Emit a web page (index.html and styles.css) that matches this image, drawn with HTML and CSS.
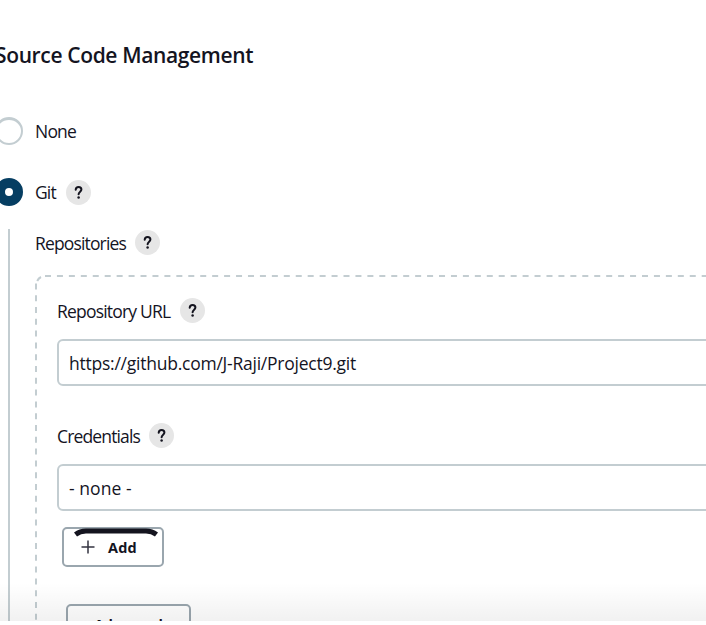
FILE: index.html
```html
<!DOCTYPE html>
<html lang="en">
<head>
<meta charset="utf-8">
<title>Source Code Management</title>
<link rel="stylesheet" href="styles.css">
</head>
<body>
<main class="page">
  <h1 class="title"><span>Source Code Management</span></h1>
  <div class="option option-none"><span class="radio"></span><span class="label t-none">None</span></div>
  <div class="option option-git"><span class="radio checked"></span><span class="label t-git">Git</span><span class="help"><svg viewBox="0 0 25 25"><path d="M9.700 9.800c.1-1.700 1.200-2.700 2.900-2.700 1.600 0 2.800 1 2.800 2.500 0 2.100-2.800 2.100-2.800 4.700"/><circle cx="12.600" cy="17.600" r="1.250"/></svg></span></div>
  <section class="nested">
    <div class="row row-repos"><span class="label t-repos">Repositories</span><span class="help"><svg viewBox="0 0 25 25"><path d="M9.700 9.800c.1-1.700 1.200-2.700 2.900-2.700 1.600 0 2.800 1 2.800 2.500 0 2.100-2.800 2.100-2.800 4.700"/><circle cx="12.600" cy="17.600" r="1.250"/></svg></span></div>
    <div class="repo">
      <svg class="outline" viewBox="0 0 900 600"><path d="M10 1H900"/><path d="M1 600V8" class="side"/><path d="M2.200 6Q3.500 3.200 6 2" class="corner"/></svg>
      <div class="row"><span class="label t-url">Repository URL</span><span class="help"><svg viewBox="0 0 25 25"><path d="M9.700 9.800c.1-1.700 1.200-2.700 2.900-2.700 1.600 0 2.800 1 2.800 2.500 0 2.100-2.800 2.100-2.800 4.700"/><circle cx="12.600" cy="17.600" r="1.250"/></svg></span></div>
      <div class="field"><span class="t-value">https://github.com/J-Raji/Project9.git</span></div>
      <div class="row row-cred"><span class="label t-cred">Credentials</span><span class="help"><svg viewBox="0 0 25 25"><path d="M9.700 9.800c.1-1.700 1.200-2.700 2.900-2.700 1.600 0 2.800 1 2.800 2.500 0 2.100-2.800 2.100-2.800 4.700"/><circle cx="12.600" cy="17.600" r="1.250"/></svg></span></div>
      <div class="field"><span class="t-select">- none -</span></div>
      <button class="add"><svg class="stroke" viewBox="0 0 84 9"><path d="M1.500 6.500Q6 3 12 3H72Q78 3 82.500 6.500"/></svg><svg class="plus" viewBox="0 0 14 14"><path d="M7 .5v13M.5 7h13"/></svg><span>Add</span></button>
      <button class="advanced">Advanced</button>
    </div>
  </section>
  <div class="shade"></div>
</main>
</body>
</html>
```
FILE: styles.css
```css
* { box-sizing: border-box; }
body { margin: 0; height: 625px; overflow: hidden; background: #fff; color: #14141f; font-family: "Open Sans", "Noto Sans", sans-serif; font-size: 17.5px; }
.page { position: relative; height: 621px; overflow: hidden; padding-top: 40px; }
.title { margin: 0 0 0 -5px; height: 30px; line-height: 31px; font-size: 21px; font-weight: 600; letter-spacing: -.36px; white-space: nowrap; }
.option { display: flex; align-items: center; height: 28px; margin-left: -5px; }
.option-none { margin-top: 47px; }
.option-git { margin-top: 33px; }
.radio { width: 28px; height: 28px; margin-right: 12px; border: 2px solid #c3cdd1; border-top-width: 3px; border-radius: 50%; }
.radio.checked { border: 10px solid #063e62; background: #fff; }
.label { line-height: 24px; white-space: nowrap; letter-spacing: -.85px; }
.t-none, .t-url { letter-spacing: -.8px; }
.t-git { width: 31px; }
.t-repos { width: 100px; }
.t-url { width: 123px; }
.t-cred { width: 92px; }
.help { width: 25px; height: 25px; border-radius: 50%; background: #e6e6e6; flex: none; }
.help svg { display: block; width: 25px; height: 25px; }
.help path { fill: none; stroke: #14141f; stroke-width: 2; stroke-linecap: round; }
.help circle { fill: #14141f; }
.nested { margin: 23px 0 0 8px; padding-left: 25px; border-left: 2px solid #c3cdd1; height: 500px; }
.row { display: flex; align-items: center; height: 25px; }
.row-repos { position: relative; top: 1px; }
.repo { position: relative; width: 900px; height: 600px; margin-top: 21px; padding: 23px 22px; }
.outline { position: absolute; left: 0; top: 0; width: 900px; height: 600px; }
.outline path { fill: none; stroke: #c3cdd1; stroke-width: 2; stroke-dasharray: 6 5.94; }
.outline .side { stroke-dasharray: 6 5.8; stroke-dashoffset: 4.4; }
.outline .corner { stroke-dasharray: none; }
.field { height: 47px; margin-top: 16px; padding-left: 10px; display: flex; align-items: center; border: 2px solid #c3cdd1; border-radius: 6px; background: #fff; white-space: nowrap; }
.row-cred { margin-top: 37px; }
.t-value { letter-spacing: -.24px; }
.t-select { letter-spacing: .05px; }
.add, .advanced { border: 2px solid #9aa6ae; border-radius: 5px; background: #fff; color: #14141f; font: 700 14px "Open Sans", sans-serif; }
.add { position: relative; display: flex; align-items: center; width: 102px; height: 40px; margin: 16px 0 0 5px; padding: 0 0 0 17px; font-size: 14.5px; letter-spacing: .2px; }
.stroke { position: absolute; left: 10px; top: -1px; width: 84px; height: 9px; }
.stroke path { fill: none; stroke: #14141f; stroke-width: 5; }
.plus { width: 14px; height: 14px; margin-right: 13px; }
.plus path { stroke: #333340; stroke-width: 1.500; }
.advanced { display: block; width: 125px; height: 41px; margin: 37px 0 0 9px; padding: 0; }
.shade { position: absolute; left: 0; right: 0; bottom: 0; height: 38px; background: linear-gradient(rgba(0,0,0,0), rgba(0,0,0,.055)); pointer-events: none; }
```
